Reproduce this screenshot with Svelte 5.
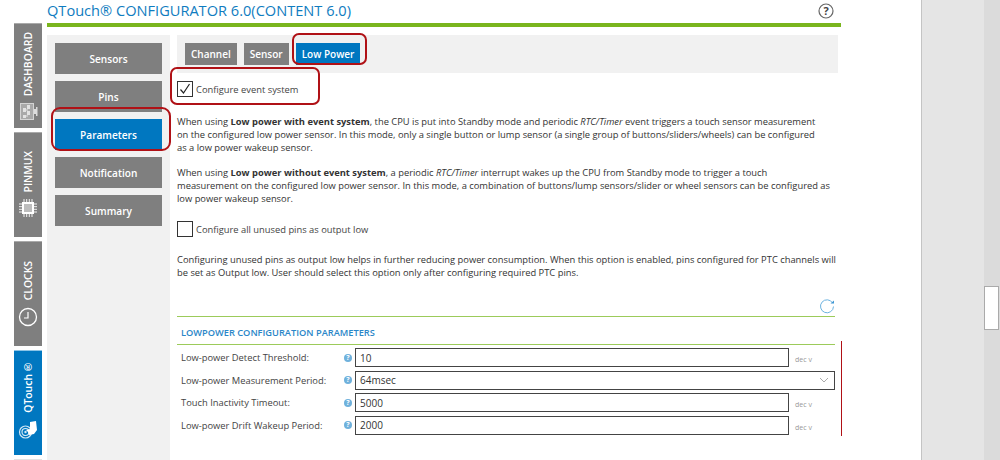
<script>
	const rail = [
		{ label: 'DASHBOARD', icon: 'dash', pad: 8, gap: 4 },
		{ label: 'PINMUX', icon: 'chip', pad: 19, gap: 6 },
		{ label: 'CLOCKS', icon: 'clock', pad: 19, gap: 7 },
		{ label: 'QTouch®', icon: 'touch', active: true, pad: 16, gap: 6 }
	]
	const steps = ['Sensors', 'Pins', 'Parameters', 'Notification', 'Summary']
	const tabs = ['Channel', 'Sensor', 'Low Power']
	const params = [
		{ label: 'Low-power Detect Threshold:', value: '10' },
		{ label: 'Low-power Measurement Period:', value: '64msec', select: true },
		{ label: 'Touch Inactivity Timeout:', value: '5000' },
		{ label: 'Low-power Drift Wakeup Period:', value: '2000' }
	]
</script>

<div class="page">
	<nav class="rail">
		{#each rail as item}
			<div class="rail-tab" class:active={item.active} style="padding-bottom: {item.pad}px; gap: {item.gap}px">
				<span class="rail-label">{item.label}</span>
				<svg class="rail-icon" viewBox="0 0 20 20" width="20" height="20">
					{#if item.icon === 'dash'}
						<rect x="2.500" y="3.500" width="13" height="16" fill="#a9a9a9" stroke="#d4d4d4" />
						<path d="M5 8h3v4H5zM9 5h3v4H9zM9 11h3v4H9zM5 15h3v3H5z" fill="#e2e2e2" />
						<path d="M8 10h2M8 16h2" stroke="#e2e2e2" />
						<path d="M16 9h2v5h-2zM18 7h1.500v9H18z" fill="#dcdcdc" />
					{:else if item.icon === 'chip'}
						<rect x="5" y="5" width="10" height="10" fill="#bdbdbd" stroke="#fff" stroke-width="2" />
						<path d="M6 1v3M8.700 1v3M11.300 1v3M14 1v3M6 16v3M8.700 16v3M11.300 16v3M14 16v3M1 6h3M1 8.700h3M1 11.300h3M1 14h3M16 6h3M16 8.700h3M16 11.300h3M16 14h3" stroke="#f2f2f2" fill="none" />
					{:else if item.icon === 'clock'}
						<circle cx="10" cy="10" r="8.500" fill="none" stroke="#fff" stroke-width="1.300" />
						<path d="M10 5v6H6" fill="none" stroke="#fff" stroke-width="1.200" />
					{:else}
						<circle cx="7.500" cy="13" r="6" fill="none" stroke="#d3e8f6" stroke-width="1.200" />
						<circle cx="7.500" cy="13" r="3.500" fill="none" stroke="#d3e8f6" stroke-width="1.200" />
						<circle cx="7.500" cy="13" r="1.200" fill="#d3e8f6" />
						<path d="M8 11l4-1V3l6-1 1 9-3 4-5 1-1-3z" fill="#fff" />
					{/if}
				</svg>
			</div>
		{/each}
		<div class="rail-next"></div>
	</nav>

	<div class="content">
		<header class="title-row">
			<h1>QTouch® CONFIGURATOR 6.0(CONTENT 6.0)</h1>
			<svg class="help" viewBox="0 0 16 16" width="16" height="16">
				<circle cx="8" cy="8" r="7" fill="none" stroke="#666" stroke-width="1.200" />
				<text x="8" y="12" text-anchor="middle" class="help-mark">?</text>
			</svg>
		</header>

		<div class="columns">
			<aside class="steps">
				{#each steps as step}
					<button class="step" class:current={step === 'Parameters'}>{step}</button>
				{/each}
				<span class="mark mark-step"></span>
			</aside>

			<main class="panel">
				<div class="tabs">
					{#each tabs as tab}
						<button class="tab" class:current={tab === 'Low Power'}>{tab}</button>
					{/each}
				</div>
				<span class="mark mark-tab"></span>
				<span class="mark mark-check"></span>

				<label class="check first">
					<span class="box">
						<svg viewBox="0 0 14 14" width="14" height="14">
							<path d="M2.500 7.500l3 3.500L11.500 2" fill="none" stroke="#222" stroke-width="1.200" />
						</svg>
					</span>
					Configure event system
				</label>

				<p class="one">
					When using <b>Low power with event system</b>, the CPU is put into Standby mode and periodic <i>RTC/Timer</i> event triggers a touch sensor measurement<br />
					on the configured low power sensor. In this mode, only a single button or lump sensor (a single group of buttons/sliders/wheels) can be configured<br />
					as a low power wakeup sensor.
				</p>
				<p class="two">
					When using <b>Low power without event system</b>, a periodic <i>RTC/Timer</i> interrupt wakes up the CPU from Standby mode to trigger a touch<br />
					measurement on the configured low power sensor. In this mode, a combination of buttons/lump sensors/slider or wheel sensors can be configured as<br />
					low power wakeup sensor.
				</p>

				<label class="check second">
					<span class="box"></span>
					Configure all unused pins as output low
				</label>

				<p class="three">
					Configuring unused pins as output low helps in further reducing power consumption. When this option is enabled, pins configured for PTC channels will<br />
					be set as Output low. User should select this option only after configuring required PTC pins.
				</p>

				<section class="params">
					<div class="refresh-row">
						<svg viewBox="0 0 16 16" width="16" height="16">
							<path d="M13.600 5A6.500 6.500 0 1 0 14.500 8.500" fill="none" stroke="#6db3e0" stroke-width="1" />
							<path d="M11.500 5.500h3.500V2.500z" fill="#3f97d3" />
						</svg>
					</div>
					<h2>LOWPOWER CONFIGURATION PARAMETERS</h2>
					<div class="rows">
						{#each params as row}
							<div class="row">
								<span class="row-label">{row.label}</span>
								<span class="hint">?</span>
								{#if row.select}
									<div class="field wide">
										{row.value}
										<svg viewBox="0 0 10 6" width="10" height="6">
											<path d="M1 1l4 4 4-4" fill="none" stroke="#aaa" />
										</svg>
									</div>
								{:else}
									<div class="field">{row.value}</div>
									<span class="unit">dec v</span>
								{/if}
							</div>
						{/each}
						<span class="edge"></span>
					</div>
				</section>
			</main>
		</div>
	</div>

	<div class="gutter">
		<div class="scroll-track">
			<div class="scroll-thumb"></div>
		</div>
	</div>
</div>

<style>
	:global(body) {
		margin: 0;
		background: #fff;
	}

	.page {
		display: flex;
		width: 1000px;
		height: 460px;
		overflow: hidden;
		font-family: "Open Sans", sans-serif;
		color: #333;
		font-size: 9.35px;
	}

	.rail {
		width: 28px;
		margin: 23px 5px 0 14px;
		display: flex;
		flex-direction: column;
		gap: 4px;
		flex: none;
	}

	.rail-tab {
		height: 105px;
		flex: none;
		background: #7f7f7f;
		display: flex;
		flex-direction: column;
		align-items: center;
		justify-content: flex-end;
		box-sizing: border-box;
		color: #fff;
		border-top: 1px solid #aaa;
	}

	.rail-tab.active {
		background: #0077c0;
		border-top-color: #8cc4e6;
	}

	.rail-next {
		height: 4px;
		flex: none;
		background: #e2e2e2;
	}

	.rail-label {
		writing-mode: vertical-rl;
		transform: rotate(180deg);
		font-size: 10.4px;
		font-weight: 600;
	}

	.rail-icon {
		flex: none;
	}

	.content {
		width: 794px;
		flex: none;
	}

	.title-row {
		height: 23px;
		border-bottom: 4px solid #7ab51d;
		display: flex;
		align-items: flex-start;
		justify-content: space-between;
		padding-right: 7px;
	}

	h1 {
		margin: 0;
		margin-top: -1px;
		font-size: 14.6px;
		font-weight: 500;
		line-height: 22px;
		color: #0f7cc0;
	}

	.help {
		margin-top: 3px;
	}

	.help-mark {
		font-size: 11px;
		font-weight: 700;
		fill: #444;
	}

	.columns {
		display: flex;
		gap: 7px;
		margin-top: 8px;
	}

	.steps {
		position: relative;
		width: 107px;
		height: 425px;
		padding: 8px 8px;
		background: #f1f1f1;
		display: flex;
		flex-direction: column;
		gap: 7px;
		flex: none;
	}

	.step {
		height: 31px;
		border: none;
		padding: 0;
		background: #7f7f7f;
		color: #fff;
		font: 600 10.1px "Open Sans", sans-serif;
	}

	.step.current,
	.tab.current {
		background: #0077c0;
	}

	.panel {
		position: relative;
		width: 661px;
	}

	.tabs {
		height: 38px;
		background: #f1f1f1;
		padding: 8px 8px 0;
		box-sizing: border-box;
		display: flex;
		gap: 7px;
	}

	.tab {
		height: 22px;
		padding: 0 6px;
		border: none;
		background: #7f7f7f;
		color: #fff;
		font: 600 10px "Open Sans", sans-serif;
	}

	.mark {
		position: absolute;
		border: 2px solid #b01116;
		box-sizing: border-box;
		pointer-events: none;
	}

	.mark-step {
		left: 4px;
		top: 72px;
		width: 120px;
		height: 44px;
		border-radius: 9px;
	}

	.mark-tab {
		left: 115px;
		top: -2px;
		width: 75px;
		height: 32px;
		border-radius: 7px;
	}

	.mark-check {
		left: -7px;
		top: 32px;
		width: 150px;
		height: 38px;
		border-radius: 7px;
	}

	.check {
		display: flex;
		align-items: center;
		gap: 3px;
		color: #444;
	}

	.check.first {
		margin-top: 8px;
	}

	.check.second {
		margin-top: 16px;
	}

	.box {
		width: 16px;
		height: 16px;
		box-sizing: border-box;
		border: 1px solid #333;
		display: block;
	}

	.box svg {
		display: block;
	}

	p {
		margin: 0;
		font-size: 9.35px;
		line-height: 13px;
		color: #333;
		white-space: nowrap;
	}

	p.one {
		margin-top: 18px;
	}

	p.two {
		margin-top: 12px;
	}

	p.three {
		margin-top: 16px;
	}

	.params {
		width: 658px;
		margin-top: 19px;
	}

	.refresh-row {
		display: flex;
		justify-content: flex-end;
		height: 18px;
		border-bottom: 1px solid #9ccb5a;
	}

	h2 {
		margin: 0;
		height: 28px;
		line-height: 32px;
		box-sizing: border-box;
		padding-left: 4px;
		font-size: 9.25px;
		font-weight: 600;
		color: #2a86c8;
		border-bottom: 1px solid #9ccb5a;
	}

	.rows {
		position: relative;
		padding-top: 3px;
		display: flex;
		flex-direction: column;
		gap: 3.6px;
	}

	.row {
		display: flex;
		align-items: center;
		height: 19px;
		padding-left: 4px;
		color: #444;
	}

	.row-label {
		width: 163px;
	}

	.hint {
		width: 8px;
		height: 8px;
		border-radius: 50%;
		background: #6fb1dc;
		color: #fff;
		font-size: 7px;
		font-weight: 700;
		line-height: 8px;
		text-align: center;
		margin-right: 3px;
	}

	.field {
		width: 434px;
		height: 19px;
		border: 1px solid #444;
		box-sizing: border-box;
		padding-left: 4px;
		font-size: 10px;
		color: #333;
		display: flex;
		align-items: center;
		justify-content: space-between;
	}

	.field.wide {
		width: 480px;
		padding-right: 5px;
	}

	.unit {
		margin-left: 6px;
		font-size: 7px;
		color: #999;
		margin-top: 4px;
	}

	.edge {
		position: absolute;
		right: -7px;
		top: -4px;
		bottom: -1px;
		width: 1px;
		background: #b01116;
	}

	.gutter {
		margin-left: 80px;
		flex: 1;
		background: #e5e5e5;
		border-left: 1px solid #c4c4c4;
		display: flex;
		justify-content: flex-end;
	}

	.scroll-track {
		width: 16px;
		background: #dbdbdb;
		position: relative;
	}

	.scroll-thumb {
		position: absolute;
		top: 286px;
		left: 0;
		width: 15px;
		height: 44px;
		box-sizing: border-box;
		background: #fff;
		border: 1px solid #aaa;
	}
</style>
